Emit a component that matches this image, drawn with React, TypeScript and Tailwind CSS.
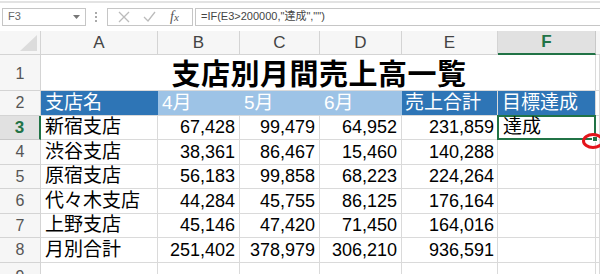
const cols = ["A", "B", "C", "D", "E", "F"];

const rows: { name: string; nums: string[]; total: string }[] = [
  { name: "新宿支店", nums: ["67,428", "99,479", "64,952"], total: "231,859" },
  { name: "渋谷支店", nums: ["38,361", "86,467", "15,460"], total: "140,288" },
  { name: "原宿支店", nums: ["56,183", "99,858", "68,223"], total: "224,264" },
  { name: "代々木支店", nums: ["44,284", "45,755", "86,125"], total: "176,164" },
  { name: "上野支店", nums: ["45,146", "47,420", "71,450"], total: "164,016" },
  { name: "月別合計", nums: ["251,402", "378,979", "306,210"], total: "936,591" },
];

const cell = "border-r border-b border-[#dadada] h-full";
const rowHead =
  "border-r border-b border-[#d4d4d4] bg-[#f6f6f6] flex items-center justify-center text-[16px] text-[#555] h-full";

export default function App() {
  return (
    <div className="relative w-[600px] h-[274px] overflow-hidden bg-white font-['Liberation_Sans','Noto_Sans_CJK_JP',sans-serif] text-black">
      {/* formula bar */}
      <div className="h-[30px] border-t-[2px] border-[#e3e3e3] mt-[1px] flex items-center pb-[4px] pt-[3px] bg-white">
        <div className="ml-[2px] w-[84px] h-[18px] border border-[#c6c6c6] flex items-center justify-between px-[5px]">
          <span className="text-[11px] text-[#666]">F3</span>
          <svg width="7" height="4" viewBox="0 0 7 4">
            <path d="M0 0h7L3.5 4z" fill="#777" />
          </svg>
        </div>
        <div className="w-[19px] flex flex-col items-center gap-[2px]">
          <span className="w-[2px] h-[2px] bg-[#aaa]" />
          <span className="w-[2px] h-[2px] bg-[#aaa]" />
          <span className="w-[2px] h-[2px] bg-[#aaa]" />
        </div>
        <div className="w-[86px] h-[18px] border border-[#c6c6c6] flex items-center ml-[2px]">
          <svg className="ml-[10px]" width="12" height="12" viewBox="0 0 12 12">
            <path d="M1 1l10 10M11 1L1 11" stroke="#bbb" strokeWidth="1.3" />
          </svg>
          <svg className="ml-[13px]" width="13" height="11" viewBox="0 0 13 11">
            <path d="M1 6l4 4 7-9" stroke="#bbb" strokeWidth="1.3" fill="none" />
          </svg>
          <span className="ml-[14px] font-['Liberation_Serif',serif] italic text-[14px] text-[#555] leading-none">
            f<span className="text-[11px]">x</span>
          </span>
        </div>
        <div className="flex-1 h-[18px] border border-[#c6c6c6] border-r-0 ml-[2px] flex items-center pl-[5px]">
          <span className="text-[11px] text-[#444] whitespace-nowrap">
            =IF(E3&gt;200000,"達成","")
          </span>
        </div>
      </div>

      {/* sheet */}
      <div className="grid grid-cols-[41px_117px_82px_80px_82px_96px_98px_1fr] grid-rows-[24px_36px_25px_24px_25px_24px_25px_24px_25px_1fr] h-[244px]">
        {/* column header */}
        <div className="border-r border-b border-[#d4d4d4] bg-[#f6f6f6] relative h-full">
          <svg className="absolute right-[3px] bottom-[3px]" width="17" height="16" viewBox="0 0 17 16">
            <path d="M17 0V16H0z" fill="#dcdcdc" />
          </svg>
        </div>
        {cols.map((c) =>
          c === "F" ? (
            <div
              key={c}
              className="bg-[#e1e1e1] border-r border-[#c8c8c8] border-b-[2px] border-b-[#217346] flex items-center justify-center text-[17px] font-bold text-[#217346] h-full"
            >
              {c}
            </div>
          ) : (
            <div
              key={c}
              className="bg-[#f6f6f6] border-r border-b border-[#d4d4d4] flex items-center justify-center text-[17px] text-[#444] h-full"
            >
              {c}
            </div>
          )
        )}
        <div className="border-b border-[#d4d4d4] bg-[#f6f6f6] h-full" />

        {/* row 1 */}
        <div className={`${rowHead} items-end pb-[4px]`}>1</div>
        <div className="col-span-6 border-r border-b border-[#dadada] flex items-center justify-center h-full">
          <span className="font-['Noto_Sans_CJK_JP',sans-serif] font-bold text-[29px] leading-none tracking-[0.5px] pl-[2px]">
            支店別月間売上高一覧
          </span>
        </div>
        <div className={cell} />

        {/* row 2 */}
        <div className={rowHead}>2</div>
        <div className="bg-[#2e75b6] text-white text-[19px] flex items-center pl-[4px] h-full border-b border-[#dadada]">支店名</div>
        {["4月", "5月", "6月"].map((m) => (
          <div key={m} className="bg-[#9dc3e6] text-white text-[19px] flex items-center pl-[4px] h-full border-b border-[#dadada]">
            {m}
          </div>
        ))}
        <div className="bg-[#2e75b6] text-white text-[19px] flex items-center pl-[3px] h-full border-r border-b border-[#dadada]">売上合計</div>
        <div className="bg-[#2e75b6] text-white text-[19px] flex items-center pl-[4px] h-full border-r border-b border-[#dadada]">目標達成</div>
        <div className={cell} />

        {/* data rows */}
        {rows.map((r, i) => (
          <div key={r.name} className="contents">
            {i === 0 ? (
              <div className="border-r-[2px] border-r-[#217346] border-b border-[#c8c8c8] bg-[#e1e1e1] flex items-center justify-center text-[17px] font-bold text-[#217346] h-full">
                3
              </div>
            ) : (
              <div className={rowHead}>{i + 3}</div>
            )}
            <div className={`${cell} flex items-center pl-[4px] text-[19px]`}>{r.name}</div>
            {r.nums.map((n, j) => (
              <div key={j} className={`${cell} flex items-center justify-end pr-[4px] text-[18px]`}>
                {n}
              </div>
            ))}
            <div className={`${cell} flex items-center justify-end pr-[3px] text-[18px]`}>{r.total}</div>
            {i === 0 ? (
              <div className="relative border-[2px] border-[#217346] -ml-px -mt-px h-[calc(100%+1px)] flex items-center pl-[4px] text-[19px]">
                達成
                <span className="absolute -right-[4px] -bottom-[4px] w-[6px] h-[6px] bg-[#217346] border border-white" />
              </div>
            ) : (
              <div className={cell} />
            )}
            <div className={cell} />
          </div>
        ))}

        {/* row 9 */}
        <div className={`${rowHead} items-start pt-[2px]`}>9</div>
        {cols.map((c) => (
          <div key={c} className={cell} />
        ))}
        <div className={cell} />
      </div>

      {/* red annotation circle around the fill handle */}
      <svg className="absolute left-[580px] top-[132px]" width="24" height="18" viewBox="0 0 24 18">
        <ellipse cx="13" cy="9" rx="9.5" ry="6.5" fill="none" stroke="#e4141b" strokeWidth="3" />
      </svg>
    </div>
  );
}
